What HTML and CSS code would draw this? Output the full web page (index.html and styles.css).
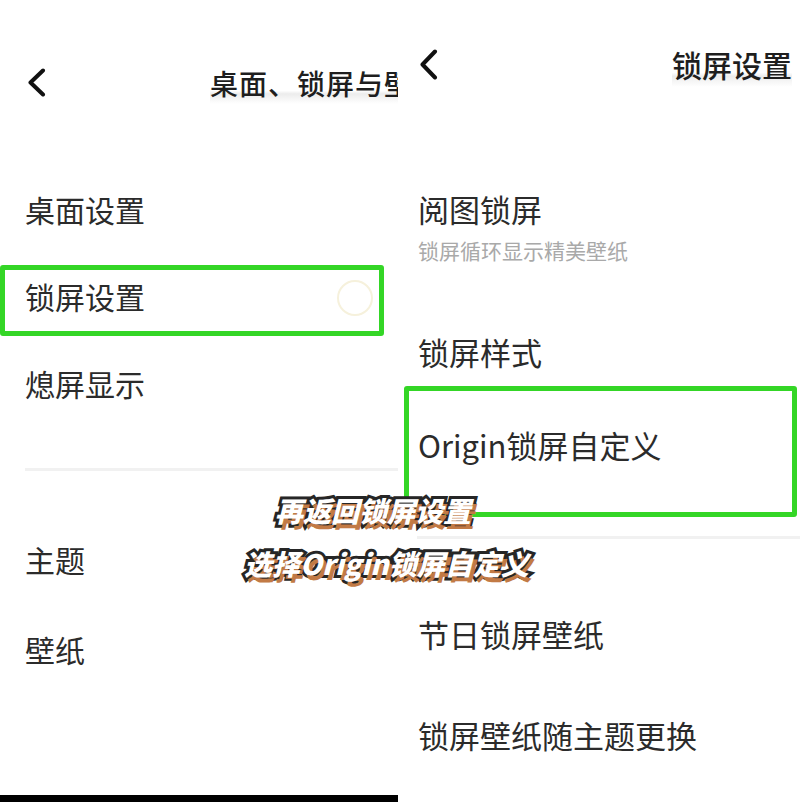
FILE: index.html
```html
<!DOCTYPE html>
<html lang="zh-CN">
<head>
    <meta charset="UTF-8">
    <meta name="viewport" content="width=device-width, initial-scale=1.0">
    <title>锁屏设置</title>
    <link rel="stylesheet" href="styles.css">
</head>
<body>
    <div class="screens">
        <!-- left phone: desktop / lock screen / wallpaper -->
        <section class="panel panel-left">
            <header class="topbar">
                <svg class="back" width="19" height="29" viewBox="0 0 19 29">
                    <polyline points="16,2.5 3.5,14.5 16,26.5" fill="none" stroke="#111" stroke-width="4" stroke-linecap="round" stroke-linejoin="round"/>
                </svg>
                <h1 class="title">桌面、锁屏与壁纸</h1>
            </header>
            <div class="row">桌面设置</div>
            <div class="row">
                锁屏设置
                <span class="ripple"></span>
                <span class="mark mark-left"></span>
            </div>
            <div class="row">熄屏显示</div>
            <div class="divider"></div>
            <div class="group">
                <div class="row row-wide">主题</div>
                <div class="row row-wide">壁纸</div>
            </div>
            <div class="navbar"></div>
        </section>

        <!-- right phone: lock screen settings -->
        <section class="panel panel-right">
            <header class="topbar">
                <svg class="back" width="19" height="31" viewBox="0 0 19 31">
                    <polyline points="16,2.5 3.5,15.5 16,28.5" fill="none" stroke="#111" stroke-width="4" stroke-linecap="round" stroke-linejoin="round"/>
                </svg>
                <h1 class="title">锁屏设置</h1>
            </header>
            <div class="item item-first">
                <div class="item-title">阅图锁屏</div>
                <div class="item-sub">锁屏循环显示精美壁纸</div>
            </div>
            <div class="item item-mid">锁屏样式</div>
            <div class="item item-mid">
                Origin锁屏自定义
                <span class="mark mark-right"></span>
            </div>
            <div class="divider"></div>
            <div class="item item-tall item-gap">节日锁屏壁纸</div>
            <div class="item item-tall">锁屏壁纸随主题更换</div>
        </section>
    </div>

    <div class="caption">
        <p class="caption-line caption-first">再返回锁屏设置</p>
        <p class="caption-line">选择Origin锁屏自定义</p>
    </div>
</body>
</html>
```

FILE: styles.css
```css
:root {
    --text-color: #2b2b2b;
    --sub-color: #a9a9a9;
    --mark-color: #34d626;
    --line-color: #f1f1f1;
}

* {
    margin: 0;
    padding: 0;
    box-sizing: border-box;
}

body {
    font-family: "Noto Sans CJK SC", "Noto Sans", sans-serif;
    background-color: #fff;
    color: var(--text-color);
    width: 800px;
    height: 802px;
    overflow: hidden;
    position: relative;
}

.screens {
    display: flex;
    gap: 2px;
    height: 802px;
}

.panel {
    display: flex;
    flex-direction: column;
    overflow: hidden;
    background-color: #fff;
}

.panel-left {
    width: 398px;
}

.panel-right {
    flex: 1;
}

/* header */
.topbar {
    display: flex;
    align-items: center;
    white-space: nowrap;
}

.back {
    flex-shrink: 0;
}

.panel-left .topbar {
    height: 165px;
    padding-left: 27px;
}

.panel-right .topbar {
    height: 128px;
    padding-left: 19px;
    padding-right: 8px;
    justify-content: space-between;
}

.title {
    font-weight: 500;
    color: #1e1e1e;
    line-height: 1.5;
    background: linear-gradient(to bottom, #fff 0%, #fff 68%, #ececec 76%, #f6f6f6 88%, #fff 100%);
}

.panel-left .title {
    margin-left: 164px;
    font-size: 28px;
    letter-spacing: 1px;
}

.panel-right .title {
    font-size: 30px;
}

/* left list */
.row {
    position: relative;
    height: 87px;
    display: flex;
    align-items: center;
    padding-left: 25px;
    font-size: 30px;
    white-space: nowrap;
}

.row-wide {
    height: 90px;
}

.group {
    padding-top: 43px;
}

.divider {
    height: 3px;
    background-color: var(--line-color);
}

.panel-left .divider {
    margin: 42px 0 0 25px;
}

.panel-right .divider {
    margin: 45px 0 0 17px;
}

.ripple {
    position: absolute;
    left: 337px;
    top: 28px;
    width: 36px;
    height: 36px;
    border: 2px solid #f6f1dc;
    border-radius: 50%;
}

.navbar {
    margin-top: auto;
    height: 7px;
    background-color: #000;
}

/* right list */
.item {
    position: relative;
    display: flex;
    align-items: center;
    padding-left: 18px;
    font-size: 31px;
    white-space: nowrap;
}

.item-first {
    flex-direction: column;
    align-items: flex-start;
    padding-top: 61px;
    height: 177px;
}

.item-title {
    line-height: 40px;
}

.item-sub {
    margin-top: 6px;
    font-size: 21px;
    line-height: 30px;
    color: var(--sub-color);
}

.item-mid {
    height: 93px;
}

.item-tall {
    height: 101px;
}

.item-gap {
    margin-top: 44px;
}

/* green highlight boxes */
.mark {
    position: absolute;
    border: 5px solid var(--mark-color);
    border-radius: 3px;
}

.mark-left {
    left: 0;
    top: 13px;
    width: 384px;
    height: 71px;
}

.mark-right {
    left: 4px;
    top: -12px;
    width: 393px;
    height: 131px;
}

/* video caption */
.caption {
    position: absolute;
    left: 244px;
    top: 484px;
    display: flex;
    flex-direction: column;
    align-items: flex-start;
}

.caption-line {
    font-size: 28px;
    font-weight: 900;
    font-style: italic;
    line-height: 53px;
    color: #fff;
    -webkit-text-stroke: 6px #262626;
    paint-order: stroke fill;
    text-shadow: 3px 5px 0 #c27a45;
    white-space: nowrap;
}

.caption-first {
    padding-left: 31px;
}
```
